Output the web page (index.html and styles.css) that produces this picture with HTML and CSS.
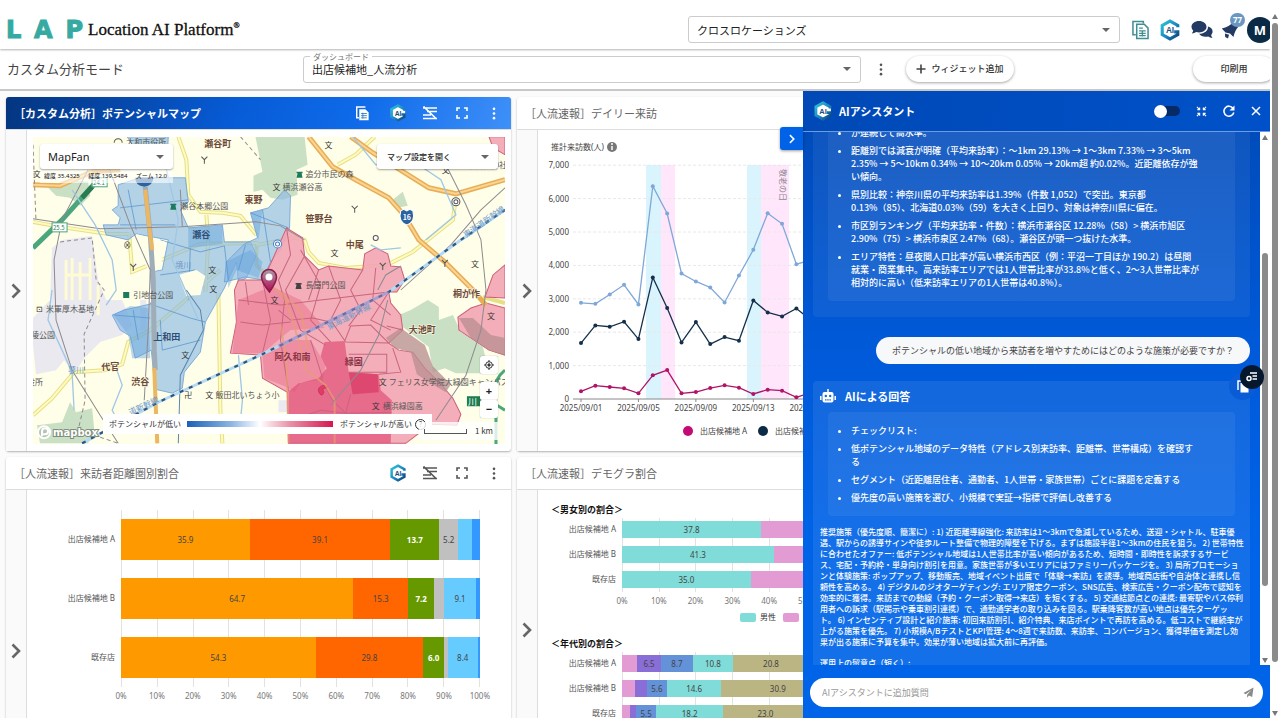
FILE: index.html
```html
<!DOCTYPE html>
<html lang="ja">
<head>
<meta charset="utf-8">
<title>Location AI Platform</title>
<link rel="stylesheet" href="styles.css">
</head>
<body>
<svg class="defs" aria-hidden="true">
  <defs>
    <linearGradient id="hexg" x1="0" y1="0" x2="1" y2="1"><stop offset="0" stop-color="#2cc4d4"/><stop offset=".55" stop-color="#1b86c4"/><stop offset="1" stop-color="#0d3f73"/></linearGradient>
    <linearGradient id="pin" x1="0" y1="0" x2="0" y2="1"><stop offset="0" stop-color="#a9a0a8"/><stop offset="1" stop-color="#b3054f"/></linearGradient>
  </defs>
  <symbol id="ai" viewBox="0 0 24 24"><path d="M12 1 21.500 6.500V17.500L12 23 2.500 17.500V6.500Z" fill="#fff"/><path d="M20.500 9V7L12 2.300 3.500 7v10l8.500 4.700 8.500-4.700v-3h-4" fill="none" stroke="url(#hexg)" stroke-width="3.400"/><text x="12" y="15.500" text-anchor="middle" font-family="Liberation Sans" font-weight="700" font-size="9" fill="#1d4f7c">AI</text></symbol>
  <symbol id="doc" viewBox="0 0 18 20"><path d="M12 3V1H1v14h3" fill="none" stroke="currentColor" stroke-width="1.600"/><path d="M5 4h8l4 4v11H5z" fill="none" stroke="currentColor" stroke-width="1.600"/><path d="M7.500 8h4M7.500 11h7M7.500 13.500h7M7.500 16h7M11 11v6" stroke="currentColor" stroke-width="1.400"/></symbol>
  <symbol id="docfill" viewBox="0 0 18 20"><path d="M12 2V1H1v15h3" fill="none" stroke="currentColor" stroke-width="2"/><path d="M4.500 4H13l4.500 4.500V19.500h-13z" fill="currentColor"/><path d="M7 10h8M7 13h8M7 16h8M9.500 9v8" stroke="#2f78bd" stroke-width="1.200"/></symbol>
  <symbol id="listoff" viewBox="0 0 16 14"><path d="M1 2h14M5 5.500h10M1 9h8M1 12.500h14M1.500 0.500l13 12.500" stroke="currentColor" stroke-width="1.700" fill="none"/></symbol>
  <symbol id="full" viewBox="0 0 12 12"><path d="M1 4V1h3M8 1h3v3M11 8v3H8M4 11H1V8" fill="none" stroke="currentColor" stroke-width="1.600"/></symbol>
  <symbol id="dots" viewBox="0 0 4 14"><circle cx="2" cy="2" r="1.400"/><circle cx="2" cy="7" r="1.400"/><circle cx="2" cy="12" r="1.400"/></symbol>
  <symbol id="chev" viewBox="0 0 10 16"><path d="M1.500 1.500 8 8l-6.500 6.500" fill="none" stroke="currentColor" stroke-width="2.600"/></symbol>
</svg>

<div class="app">
  <div class="page">
    <header class="topbar">
      <a class="brand" href="#">
        <span class="mark"><span>L</span><span>A</span><span>P</span></span>
        <span class="name">Location AI Platform<sup>®</sup></span>
      </a>
      <div class="tools">
        <label class="pick account"><select aria-label="アカウント"><option>クロスロケーションズ</option></select><i class="caret"></i></label>
        <button class="ico teal" aria-label="レポート"><svg width="17" height="20"><use href="#doc"/></svg></button>
        <button class="ico" aria-label="AI"><svg width="22" height="22"><use href="#ai"/></svg></button>
        <button class="ico navy" aria-label="チャット"><svg width="22" height="20" viewBox="0 0 22 20"><path d="M8 1c4.200 0 7.500 2.500 7.500 5.800S12.200 12.500 8 12.500c-1 0-2-.2-2.900-.4C4 13 2.500 13.500.8 13.500c.8-.9 1.200-1.900 1.400-3C1.100 9.500.500 8.200.500 6.800.500 3.500 3.800 1 8 1z" fill="currentColor"/><path d="M17 6.500c2.700.7 4.600 2.600 4.600 5 0 1.300-.6 2.500-1.500 3.400.2 1.200.7 2.100 1.300 3-1.700 0-3-.5-4.200-1.400-.8.200-1.700.3-2.600.3-2.900 0-5.300-1.200-6.500-3 5.200 0 9.200-3 8.900-7.300z" fill="currentColor"/></svg></button>
        <button class="ico navy bell" aria-label="お知らせ"><svg width="18" height="19" viewBox="0 0 18 19"><path d="M.8 8.500Q8 7 13 1.500L17.500 6.500Q13.500 11 12.500 17L9 13.500 4.500 12.500z" fill="currentColor"/><path d="M4 13.500l4 1.300-1 3.700-2.800-1.500z" fill="currentColor"/></svg><span class="badge">77</span></button>
        <button class="avatar" aria-label="ユーザー">M</button>
      </div>
    </header>

    <div class="subbar">
      <h1>カスタム分析モード</h1>
      <label class="pick board"><span class="float">ダッシュボード</span><select><option>出店候補地_人流分析</option></select><i class="caret"></i></label>
      <button class="ico grey" aria-label="メニュー"><svg width="4" height="13" fill="currentColor"><use href="#dots"/></svg></button>
      <button class="pill add"><svg width="10" height="10" viewBox="0 0 10 10"><path d="M5 .5v9M.5 5h9" stroke="#444" stroke-width="1.600"/></svg>ウィジェット追加</button>
      <button class="pill print">印刷用</button>
    </div>

    <div class="work">
      <main class="cards">
        <section class="card">
          <div class="head active"><h2>［カスタム分析］ポテンシャルマップ</h2>
            <button class="ico wide" aria-label="レポート"><svg width="13" height="15"><use href="#docfill"/></svg></button>
            <button class="ico" aria-label="AI"><svg width="18" height="18"><use href="#ai"/></svg></button>
            <button class="ico" aria-label="凡例"><svg width="16" height="14"><use href="#listoff"/></svg></button>
            <button class="ico" aria-label="拡大"><svg width="12" height="12"><use href="#full"/></svg></button>
            <button class="ico" aria-label="メニュー"><svg width="4" height="13" fill="currentColor"><use href="#dots"/></svg></button>
          </div>
          <div class="body">
            <button class="rail" aria-label="開く"><svg width="10" height="16"><use href="#chev"/></svg></button>
            <div class="mapwrap">
              <svg class="map" viewBox="33 137 471 307" preserveAspectRatio="xMidYMid slice">
                <rect x="33" y="137" width="471" height="307" fill="#fffee8"/>
                <g fill="#e9e9ef"><path d="M52 248 62 240 92 236 98 280 106 300 122 300 132 325 122 335 100 342 84 358 74 374 64 360 56 370 36 374 33 345 33 318 50 300Z"/><path d="M140 300h6v30h-6zM278 400h10v12h-10z"/></g>
                <path d="M66 260v40M72 258v42M80 262v38M90 258v42M98 285v30M66 275h24" stroke="#fffbd2" stroke-width="3" fill="none"/>
                <g fill="#c9e0c4"><path d="M48 188 66 180 88 182 90 196 80 206 70 198 56 196Z"/><path d="M37 425 62 422 70 402 76 412 92 408 94 428 88 443H40Z"/><path d="M253 176 262 172 255 137H304L307 165 296 170 297 195 282 200 270 198 262 190 253 192Z"/><path d="M398 315 410 310 427 300 438 307 438 320 452 315 460 332 482 347 488 373 455 373 444 368 432 372 428 347 402 327Z"/><path d="M392 200 402 192 407 206 397 208Z"/></g>
                <g fill="none" stroke="#e6df86" stroke-width="4"><path d="M33 222 60 227 108 234 129 234 M129 234 132 272 200 244 258 243M178 137 186 160 188 195 200 212 222 213 240 216 256 235M206 215 208 240 205 292M218 293 220 410 222 443M33 415 52 398 74 372 104 370 122 364 128 342 150 330 188 298 220 270M337 165 355 155 374 137M256 245 295 238 304 240 308 252 318 263 345 268 386 265 412 252 452 220 454 205M455 150 490 160M482 297 504 303M256 245 256 265 275 285"/></g>
                <g fill="none" stroke="#fffbc0" stroke-width="2"><path d="M33 222 60 227 108 234 129 234 132 272 200 244 258 243M178 137 186 160 188 195 200 212 222 213 240 216 256 235M206 215 208 240 205 292M218 293 220 410 222 443M33 415 52 398 74 372 104 370 122 364 128 342 150 330 188 298 220 270M337 165 355 155 374 137M256 245 295 238 304 240 308 252 318 263 345 268 386 265 412 252 452 220 454 205"/></g>
                <g fill="#8ab8e3" fill-opacity=".64" stroke="#6ba0d6" stroke-width=".8">
                  <path d="M127 137H168L167 158H140Z"/>
                  <path d="M118 185 140 178 185 178 188 202 180 210 188 228 222 225 224 242 250 242 256 255 246 278 238 282 236 262 224 288 205 322 200 352 184 372 182 388 172 393 155 389 151 350 135 358 130 336 120 330 112 315 124 310 150 304 152 300 150 272 162 270 168 240 136 234 128 240 106 235 103 225 118 225 120 218 112 210 118 206Z"/>
                  <path d="M250 213 268 208 284 190 290 196 289 228 280 250 270 262 262 280 245 277 224 282 226 262 244 244 257 238Z"/>
                </g>
                <g fill="#609fdd" fill-opacity=".42"><path d="M113 315 130 306 148 308 150 358 132 358 128 335ZM188 228 222 226 222 244 188 248ZM225 262 250 250 262 262 258 278 236 270 228 288ZM250 213 262 210 258 240Z"/></g>
                <path d="M120 208 188 200M128 190 136 230M120 225 175 225M160 240 200 252 224 246M190 248 188 300M160 275 195 270M150 304 190 318 205 322M160 320 162 350 200 340M133 310 138 340M114 315 150 318M224 246 228 280M245 245 238 270M250 213 288 228M262 210 270 262" fill="none" stroke="#5b97d0" stroke-width=".8"/>
                <path d="M136 234 166 242 160 268 150 274 142 258ZM178 275 196 270 205 276 200 295 186 296Z" fill="#fffee8"/>
                <path d="M145 187 150 235 153 280 154 350 155 370" fill="none" stroke="#9fadb8" stroke-width="5"/><path d="M145 190 149 228 152 250M154 368 157 443" fill="none" stroke="#ecb762" stroke-width="4"/>
                <g fill="#f2a5b4" fill-opacity=".9" stroke="#cc5f7b" stroke-width="1">
                  <path d="M286 228 302 238 304 256 318 270 328 266 362 270 364 254 375 248 387 254 390 266 400 267 404 280 396 292 388 292 390 303 400 315 402 330 388 343 398 350 412 352 424 368 440 384 452 398 460 414 456 425 430 424 405 443 288 443 287 392 262 378 260 355 230 353 236 322 234 290 238 280 262 280 270 264Z"/>
                  <path d="M488 137H504V155L492 148ZM484 297 492 275 504 265V298ZM457 317 470 308 485 303 504 308V355L488 350 470 338 458 330Z"/>
                </g>
                <g fill="#ed7893" fill-opacity=".6"><path d="M238 300 262 290 288 296 290 330 262 353 232 353ZM262 355 288 340 310 340 325 365 322 380 300 382 294 392 284 386 264 378ZM262 282 300 300 324 328 290 330 270 308Z"/></g>
                <path d="M324 342 344 341 348 372 378 374 380 390 391 400 390 443H288V391L298 383 318 378 326 368 320 356Z" fill="#e25278" fill-opacity=".72"/><path d="M348 372 377 374 378 392 352 394Z" fill="#dd4770"/>
                <path d="M385 338 400 328 424 345 432 366 450 384 445 392 428 382 416 374 410 352 394 348ZM458 318 472 318 490 335 504 338V355L488 350 470 338Z" fill="#b98f92" fill-opacity=".78"/>
                <path d="M286 228 290 255 278 280 284 300 280 340 288 391M262 280 270 320 262 353M238 300 280 305 320 300 388 292M300 250 320 285 310 320 330 342M304 256 285 290 300 330 325 345M328 266 340 300 330 320 345 342 388 343M362 270 350 290 360 310 348 326M375 268 372 300 390 315M388 292 370 320 390 330M318 270 308 300M344 341 350 326 370 325 388 343M348 354H386V372H348M310 340 322 378M290 420 320 410 345 413 391 412M320 378 332 400 345 413 350 394M278 310 290 320 312 318 330 322M240 322 262 325 290 322M245 282 248 305M392 348 400 372 378 374M402 330 386 326" fill="none" stroke="#c8657f" stroke-width="1"/>
                <path d="M318 388q4-5 9-1l-5 2q3 4-1 6-4-2-3-7z" fill="#e23b65" stroke="#c03058" stroke-width=".7"/>
                <g fill="none" stroke="#e79c75" stroke-width="2" opacity=".7"><path d="M282 292 292 320 306 370 325 385 334 400 334 443M280 325 286 360 288 443M270 285 300 310 308 350"/></g>
                <g fill="none" stroke="#e8ad55" stroke-width="5"><path d="M308 137 332 167 355 180 388 198 403 215 418 240 445 263 472 290 485 305M350 137 372 153 428 188 455 194 504 180M33 185 60 186 92 172 120 170"/></g>
                <g fill="none" stroke="#fad493" stroke-width="2"><path d="M308 137 332 167 355 180 388 198 403 215 418 240 445 263 472 290M350 137 372 153 428 188 455 194 504 180M33 185 60 186 92 172"/></g>
                <path d="M33 248 62 220 98 180" fill="none" stroke="#4aa67d" stroke-width="5"/><path d="M82 198 92 187" stroke="#2b7a53" stroke-width="5"/>
                <g fill="none" stroke="#8f8a90" stroke-width="1"><path d="M88 170 62 220 54 260 56 320 72 370 100 415 118 443M105 158 130 225 150 270 148 330 144 400M33 219 100 229 182 227 255 222 280 226 304 240M445 165 465 205 480 240 485 290 480 330 465 375 435 420M180 190 182 227M387 300 378 335 360 370 330 405M400 290 450 245 480 210 504 188M377 290 385 275 400 266"/><path d="M60 242 92 238 96 280 104 290 84 334 85 400 78 430M33 145 36 222M240 137 260 160M80 430 118 443" stroke-dasharray="4 3"/></g>
                <path d="M52 290 48 320 62 350 72 372 74 410M72 190 95 225 112 260 116 290 106 305M115 365 122 385 112 410 120 425M165 165 178 220 172 260 185 290 198 320M352 137 375 165 410 160 440 180 455 215 425 240M370 245 380 250 400 248M238 355 242 400 240 420" fill="none" stroke="#9fc7e6" stroke-width="1.300"/>
                <path d="M186 290 200 310 203 330 180 375 178 443" fill="none" stroke="#5b87ae" stroke-width="1"/>
                <path d="M82 443 160 401 262 354 388 292 460 240 504 210" fill="none" stroke="#b3d9f5" stroke-width="3"/><path d="M82 443 160 401 262 354 388 292 460 240 504 210" fill="none" stroke="#2f567e" stroke-width="2.200" stroke-dasharray="4 6"/>
                <path d="M278 346 388 292" fill="none" stroke="#a077b4" stroke-width="3" opacity=".6"/>
                <g fill="#fff" stroke="#4aa67d" stroke-width="1"><rect x="92" y="178" width="15" height="9"/><rect x="52" y="223" width="15" height="9"/></g>
                <path d="M135 178h18q0 8-9 9-9-1-9-9z" fill="#2c62a0"/>
                <path d="M466 396h18v10h-18z" fill="#1e7c50"/><text x="467" y="405" font-size="9" fill="#fff">川</text>
                <path d="M504 370q-10 8-10 20M495 410v34M488 400l16 10" fill="none" stroke="#4aa67d" stroke-width="3"/>
                <path d="M400 211 403 209.500 406 211 409 209.500 412 211Q415 222 406 225 397 222 400 211Z" fill="#2c62a0" stroke="#fff"/>
                <text x="406" y="220" text-anchor="middle" font-size="7" font-weight="700" fill="#fff">16</text>
                <g class="sm" fill="#2f7a58"><text x="93" y="185">24.1</text><text x="53" y="230">25.5</text></g>
                <g class="town"><text x="204" y="147">瀬谷町</text><text x="244" y="203">東野</text><text x="305" y="222">笹野台</text><text x="345" y="248">中尾</text><text x="408" y="333">大池町</text><text x="274" y="360" class="rosy">阿久和南</text><text x="344" y="365" class="rosy">緑園</text><text x="452" y="297">桐が作</text><text x="101" y="370">代官</text><text x="131" y="385">渋谷</text><text x="153" y="340" class="bluish">上和田</text><text x="192" y="238" class="bluish">瀬谷</text></g>
                <g class="poi"><text x="180" y="209">瀬谷本郷公園</text><text x="133" y="298">引地台公園</text><text x="46" y="312">米軍厚木基地</text><text x="31" y="338">陵公園</text><text x="305" y="177">追分市民の森</text><text x="282" y="190">横浜瀬谷高</text><text x="305" y="288">長屋門公園</text><text x="388" y="385">フェリス女学院大緑園キャンパス</text><text x="382" y="409">横浜緑園高</text><text x="215" y="398">飯田北いちょう小</text><text x="27" y="385">役所</text><text x="126" y="145">大和市役所</text><text x="466" y="168">中白根神社</text></g>
                <g class="poi dark"><text x="33" y="177">文</text><text x="324" y="148">文</text><text x="272" y="190">文</text><text x="330" y="256">文</text><text x="441" y="173">文</text><text x="470" y="267">文</text><text x="181" y="358">文</text><text x="205" y="398">文</text><text x="208" y="273">文</text><text x="209" y="292">文</text><text x="378" y="385">文</text><text x="371" y="409">文</text><text x="486" y="319">文</text><text x="270" y="303">文</text><text x="184" y="398">卍</text><text x="36" y="312">⊡</text><text x="123" y="248">⊗</text></g>
                <path d="M201 157l3 3 3-3M204 160v4M351 206l3 3 3-3M354 209v4M130 264l3 3 3-3M133 267v4M379 263l3 3 3-3M382 266v4M441 260l3 3 3-3M444 263v4" fill="none" stroke="#555"/>
                <g fill="#1d7a5a"><path d="M170 204h6v1.500h-1l1 4.500h-6l1-4.500h-1zM123 292h6v6h-6zM296 172h6v1.500h-1l1 4.500h-6l1-4.500h-1z"/><path d="M295 283h6v1.500h-1l1 4.500h-6l1-4.500h-1z" fill="#444"/></g>
                <g class="river"><text x="175" y="268">境川</text><text x="68" y="373">蓼川</text><text transform="translate(465 238) rotate(-35)">東海道新幹線</text><text transform="translate(328 330) rotate(-27)">東海道新幹線</text><text transform="translate(130 415) rotate(-25)">道新幹線</text></g>
                <g fill="#fff" stroke="#555"><circle cx="455" cy="202" r="4"/><circle cx="455" cy="202" r="2"/><circle cx="277" cy="244" r="4" stroke="#4b7dc2"/><circle cx="277" cy="244" r="2" stroke="#4b7dc2"/><circle cx="375" cy="238" r="2.500"/><path d="M114 143a4 4 0 1 1 8 0" fill="none"/></g>
                <path d="M269 292Q261 282 261 277a7.500 7.500 0 0 1 15 0q0 5-7 15z" fill="url(#pin)" stroke="#8c1a4c" stroke-width="1.500"/><circle cx="268.500" cy="277" r="3.500" fill="#fff"/>
                <g fill="none" stroke="#fff" stroke-width="2"><circle cx="44" cy="432" r="6" fill="#b6c6b0"/><path d="M42 436v-5a3 3 0 1 1 3 3h-2"/></g>
                <text x="53" y="436" class="mb">mapbox</text>
              </svg>
              <div class="scale-strip">
                <span>ポテンシャルが低い</span><i class="low"></i><i class="high"></i><span>ポテンシャルが高い</span><b>?</b>
              </div>
              <div class="mapbox-left">
                <label class="pick mapsel"><select aria-label="地図"><option>MapFan</option></select><i class="caret"></i></label>
                <div class="coord"><span>緯度 35.4325</span><span>経度 139.5484</span><span>ズーム 12.0</span></div>
              </div>
              <label class="pick mapset"><select aria-label="マップ設定"><option>マップ設定を開く</option></select><i class="caret"></i></label>
              <div class="mapbtns">
                <button aria-label="現在地"><svg width="10" height="10" viewBox="0 0 10 10" fill="none" stroke="#333"><circle cx="5" cy="5" r="3.300"/><circle cx="5" cy="5" r="1.200" fill="#333"/><path d="M5 0v2M5 8v2M0 5h2M8 5h2"/></svg></button>
                <div><button>+</button><button>−</button></div>
              </div>
              <div class="km"><i></i>1 km</div>
            </div>
          </div>
        </section>

        <section class="card">
          <div class="head"><h2>［人流速報］デイリー来訪</h2></div>
          <div class="body">
            <button class="rail" aria-label="開く"><svg width="10" height="16"><use href="#chev"/></svg></button>
            <svg class="line" id="daily" viewBox="538 130 726 320" preserveAspectRatio="xMinYMin slice"></svg>
          </div>
        </section>

        <section class="card">
          <div class="head"><h2>［人流速報］来訪者距離圏別割合</h2>
            <button class="ico" aria-label="AI"><svg width="18" height="18"><use href="#ai"/></svg></button>
            <button class="ico" aria-label="凡例"><svg width="16" height="14"><use href="#listoff"/></svg></button>
            <button class="ico" aria-label="拡大"><svg width="12" height="12"><use href="#full"/></svg></button>
            <button class="ico" aria-label="メニュー"><svg width="4" height="13" fill="currentColor"><use href="#dots"/></svg></button>
          </div>
          <div class="body">
            <button class="rail" aria-label="開く"><svg width="10" height="16"><use href="#chev"/></svg></button>
            <div class="chart dist" id="dist"></div>
          </div>
        </section>

        <section class="card short">
          <div class="head"><h2>［人流速報］デモグラ割合</h2></div>
          <div class="body">
            <button class="rail" aria-label="開く"><svg width="10" height="16"><use href="#chev"/></svg></button>
            <div class="demo">
              <h3>＜男女別の割合＞</h3>
              <div class="chart small" id="sex"></div>
              <div class="keys"><i class="c-teal"></i>男性<i class="c-pink"></i>女性</div>
              <h3>＜年代別の割合＞</h3>
              <div class="chart small" id="age"></div>
            </div>
          </div>
        </section>
      </main>

      <aside class="assist">
        <button class="tab" aria-label="閉じる"><svg width="6" height="10"><use href="#chev"/></svg></button>
        <header>
          <svg width="20" height="20"><use href="#ai"/></svg><h2>AIアシスタント</h2>
          <label class="switch"><input type="checkbox" aria-label="切替"></label>
          <button class="ico" aria-label="縮小"><svg width="11" height="11" viewBox="0 0 12 12"><path d="M1 1l3 3M11 1 8 4M1 11l3-3M11 11 8 8M4 1.500V4H1.500M8 1.500V4h2.500M4 10.500V8H1.500M8 10.500V8h2.500" fill="none" stroke="#fff" stroke-width="1.200"/></svg></button>
          <button class="ico" aria-label="更新"><svg width="12" height="12" viewBox="0 0 12 12"><path d="M10 3.200A5 5 0 1 0 10.800 7.500" fill="none" stroke="#fff" stroke-width="1.600"/><path d="M11.500.500v5h-5z" fill="#fff"/></svg></button>
          <button class="ico" aria-label="閉じる"><svg width="10" height="10" viewBox="0 0 10 10"><path d="M1 1l8 8M9 1 1 9" stroke="#fff" stroke-width="1.500"/></svg></button>
        </header>
        <div class="scroll">
          <div class="thread">
            <article class="msg first">
              <ul>
                <li>が連続して高水準。</li>
                <li>距離別では減衰が明確（平均来訪率）：〜1km 29.13% → 1〜3km 7.33% → 3〜5km<br>2.35% → 5〜10km 0.34% → 10〜20km 0.05% → 20km超 約0.02%。近距離依存が強<br>い傾向。</li>
                <li>県別比較：神奈川県の平均来訪率は1.39%（件数 1,052）で突出。東京都<br>0.13%（85）、北海道0.03%（59）を大きく上回り、対象は神奈川県に偏在。</li>
                <li>市区別ランキング（平均来訪率・件数）：横浜市瀬谷区 12.28%（58）&gt; 横浜市旭区<br>2.90%（75）&gt; 横浜市泉区 2.47%（68）。瀬谷区が頭一つ抜けた水準。</li>
                <li>エリア特性：昼夜間人口比率が高い横浜市西区（例：平沼一丁目ほか 190.2）は昼間<br>就業・商業集中。高来訪率エリアでは1人世帯比率が33.8%と低く、2〜3人世帯比率が<br>相対的に高い（低来訪率エリアの1人世帯は40.8%）。</li>
              </ul>
            </article>
            <p class="ask">ポテンシャルの低い地域から来訪者を増やすためにはどのような施策が必要ですか？</p>
            <article class="msg reply">
              <h3><svg width="16" height="14" viewBox="0 0 16 14"><rect x="2.500" y="3" width="11" height="10.500" rx="2" fill="#fff"/><path d="M8 0v3M.8 7v4M15.200 7v4" stroke="#fff" stroke-width="1.500"/><circle cx="5.800" cy="7" r="1.200" fill="#1468dd"/><circle cx="10.200" cy="7" r="1.200" fill="#1468dd"/><path d="M5 10.800h6" stroke="#1468dd" stroke-width="1.200" stroke-dasharray="1.500 .7"/></svg>AIによる回答</h3>
              <ul>
                <li>チェックリスト:</li>
                <li>低ポテンシャル地域のデータ特性（アドレス別来訪率、距離帯、世帯構成）を確認す<br>る</li>
                <li>セグメント（近距離居住者、通勤者、1人世帯・家族世帯）ごとに課題を定義する</li>
                <li>優先度の高い施策を選び、小規模で実証→指標で評価し改善する</li>
              </ul>
              <p>推奨施策（優先度順、簡潔に）: 1) 近距離導線強化: 来訪率は1〜3kmで急減しているため、送迎・シャトル、駐車優<br>遇、駅からの誘導サインや徒歩ルート整備で物理的障壁を下げる。まずは施設半径1〜3kmの住民を狙う。 2) 世帯特性<br>に合わせたオファー: 低ポテンシャル地域は1人世帯比率が高い傾向があるため、短時間・即時性を訴求するサービ<br>ス、宅配・予約枠・単身向け割引を用意。家族世帯が多いエリアにはファミリーパッケージを。 3) 局所プロモーショ<br>ンと体験施策: ポップアップ、移動販売、地域イベント出展で「体験→来訪」を誘導。地域商店街や自治体と連携し信<br>頼性を高める。 4) デジタルのジオターゲティング: エリア限定クーポン、SNS広告、検索広告・クーポン配布で認知を<br>効率的に獲得。来訪までの動線（予約・クーポン取得→来店）を短くする。 5) 交通結節点との連携: 最寄駅やバス停利<br>用者への訴求（駅掲示や乗車割引連携）で、通勤通学者の取り込みを図る。駅乗降客数が高い地点は優先ターゲッ<br>ト。 6) インセンティブ設計と紹介施策: 初回来訪割引、紹介特典、来店ポイントで再訪を高める。低コストで継続率が<br>上がる施策を優先。 7) 小規模A/BテストとKPI管理: 4〜8週で来訪数、来訪率、コンバージョン、獲得単価を測定し効<br>果が出る施策に予算を集中。効果が薄い地域は拡大前に再評価。</p>
              <p>運用上の留意点（短く）:</p>
              <button class="copy" aria-label="コピー"><svg width="12" height="13" viewBox="0 0 12 13"><path d="M1 10V1h7" fill="none" stroke="#fff" stroke-width="1.500"/><path d="M3.500 3H9l2.500 2.500V12.500h-8z" fill="#fff"/></svg></button>
            </article>
          </div>
          <div class="bar inner"><i class="up"></i><i class="thumb"></i><i class="down"></i></div>
        </div>
        <form class="entry"><input type="text" aria-label="質問" placeholder="AIアシスタントに追加質問"><button type="button" aria-label="送信"><svg width="11" height="11" viewBox="0 0 12 12"><path d="M.5 6.500 11.500.500 10 11 6.500 9.300 4.500 11.800V8.500L9 3.500 3 7.800z" fill="#8a8a8a"/></svg></button></form>
        <button class="fab" aria-label="設定"><svg width="12" height="12" viewBox="0 0 12 12" fill="none" stroke="#fff"><path d="M4 2h7M6.500 5h4.500M6.500 8h4.500" stroke-width="1.300"/><circle cx="3" cy="7.500" r="2" stroke-width="1.500"/></svg></button>
      </aside>
    </div>
  </div>
  <div class="bar outer"><i class="up"></i><i class="thumb"></i><i class="down"></i></div>
</div>
<script src="app.js"></script>
</body>
</html>
```
FILE: styles.css
```css
* { box-sizing: border-box; }
body { margin: 0; overflow: hidden; background: #fff; color: #333; font: 11px/16px "Noto Sans CJK JP", "Noto Sans", sans-serif; }
h1, h2, h3, p, ul { margin: 0; padding: 0; font-weight: 400; }
button { padding: 0; border: 0; background: none; color: inherit; font: inherit; }
svg { display: block; flex: none; }
.defs { position: absolute; width: 0; height: 0; }
.app { display: flex; height: 100vh; padding-bottom: 2px; }
.page { flex: 1; min-width: 0; display: flex; flex-direction: column; overflow: hidden; }

.topbar { flex: none; display: flex; align-items: center; height: 49px; padding: 10px 0 0 6px; box-shadow: 0 1px 2px rgba(0,0,0,.3); z-index: 2; }
.brand { display: flex; align-items: center; gap: 5px; color: #111; text-decoration: none; }
.mark { display: flex; justify-content: space-between; width: 77px; font: 700 24px/24px "DejaVu Sans", sans-serif; -webkit-text-stroke: 1px #36aaa2; color: #36aaa2; }
.name { font: 17px/20px "Liberation Serif", serif; -webkit-text-stroke: .3px #111; }
.name sup { font-size: 8px; line-height: 8px; }
.tools { display: flex; align-items: center; gap: 10px; margin-left: auto; margin-right: -3px; }
.ico { display: flex; align-items: center; justify-content: center; position: relative; }
.teal { color: #3d8f93; }
.navy { color: #233a63; }
.grey { color: #555; }
.account { margin-right: 2px; width: 432px; height: 27px; }
.bell { margin-left: -2px; }
.badge { position: absolute; top: -7px; left: 9px; padding: 0 3px; border-radius: 7px; background: #6a97c2; color: #fff; font: 700 8px/14px "Noto Sans", sans-serif; }
.avatar { width: 26px; height: 26px; margin-left: -2px; border-radius: 50%; background: #0b2a45; color: #fff; font: 700 13px/26px "Noto Sans", sans-serif; }

.pick { position: relative; display: grid; align-items: center; border: 1px solid #ccc; border-radius: 3px; background: #fff; color: #222; }
.pick select { grid-area: 1 / 1; width: 100%; height: 100%; padding: 0 8px; border: 0; background: none; appearance: none; color: inherit; font: inherit; }
.caret { grid-area: 1 / 1; justify-self: end; margin-right: 9px; border: 4px solid transparent; border-top-color: #666; border-bottom: 0; pointer-events: none; }

.subbar { flex: none; display: flex; align-items: center; height: 42px; padding-left: 7px; border-bottom: 2px solid #c8c8c8; }
.subbar h1 { width: 296px; font-size: 13px; line-height: 20px; color: #444; }
.board { flex: 0 1 558px; height: 27px; }
.float { position: absolute; top: -5px; left: 6px; padding: 0 3px; background: #fff; color: #777; font-size: 8px; line-height: 10px; }
.subbar .ico { margin: 0 23px 0 18px; }
.pill { display: flex; align-items: center; justify-content: center; gap: 5px; height: 26px; border-radius: 13px; background: #fff; box-shadow: 0 1px 3px rgba(0,0,0,.35); font-size: 9px; font-weight: 500; }
.add { width: 108px; }
.print { width: 82px; margin-left: auto; margin-right: -5px; }

.work { position: relative; flex: 1; min-height: 0; overflow: hidden; }
.cards { display: grid; grid-template-columns: 505px 1fr; grid-auto-rows: 354px; gap: 6px; padding: 6px; background: #fbfbfb; align-items: start; }
.card { display: flex; flex-direction: column; height: 354px; background: #fff; border-radius: 3px; box-shadow: 0 1px 2px rgba(0,0,0,.3); }
.short { height: 312px; }
.head { flex: none; display: flex; align-items: center; gap: 14px; height: 33px; padding: 0 8px; border-bottom: 1px solid #ddd; color: #555; }
.head h2 { flex: 1; font-size: 11px; line-height: 16px; color: #666; }
.head .ico { width: 18px; }
.head .wide { margin-right: 4px; }
.active { border-radius: 3px 3px 0 0; background: linear-gradient(110deg, #04357f, #075bd6 45%, #0f6bea 70%, #3f90f8); color: #fff; }
.active h2 { color: #fff; font-weight: 700; }
.body { flex: 1; display: flex; min-height: 0; }
.rail { flex: none; width: 21px; display: flex; align-items: center; justify-content: center; border-right: 1px solid #ddd; background: #fafafa; color: #666; }

.mapwrap { position: relative; flex: 1; margin: 7px 6px; }
.map { width: 100%; height: 100%; font-family: "Noto Sans CJK JP", sans-serif; }
.town { font-size: 9px; font-weight: 700; fill: #6b4a36; stroke: #fffbe8; stroke-width: 1px; paint-order: stroke; }
.town .rosy { fill: #8b3648; stroke: none; }
.town .bluish { fill: #2f4f76; stroke: none; }
.poi { font-size: 8px; fill: #555; }
.dark { fill: #333; }
.river { font-size: 8px; fill: #6f9acb; }
.sm { font-size: 6px; }
.mb { font: 700 10px "DejaVu Sans", sans-serif; fill: #fff; stroke: #7f8d7c; stroke-width: 2px; paint-order: stroke; }
.mapbox-left { position: absolute; top: 7px; left: 7px; width: 133px; }
.mapsel, .mapset { border: 0; box-shadow: 0 1px 2px rgba(0,0,0,.35); }
.mapsel { height: 25px; font-size: 11px; font-family: "Noto Sans", sans-serif; }
.coord { display: flex; justify-content: space-between; padding: 0 6px 0 4px; background: rgba(255,255,255,.6); font: 6px/14px "Noto Sans", "Noto Sans CJK JP", sans-serif; color: #111; }
.mapset { position: absolute; top: 7px; right: 7px; width: 121px; height: 25px; font-size: 8px; font-weight: 500; }
.mapset select { padding-left: 10px; }
.mapbtns { position: absolute; right: 7px; top: 219px; display: grid; gap: 8px; }
.mapbtns button { display: flex; align-items: center; justify-content: center; width: 18px; height: 18px; background: #fff; border-radius: 2px; box-shadow: 0 0 1px rgba(0,0,0,.5); font: 700 11px/16px "Noto Sans", sans-serif; color: #222; }
.scale-strip { position: absolute; left: 70px; bottom: 10px; display: flex; align-items: center; height: 20px; padding: 0 6px; background: #fff; font-size: 8px; white-space: nowrap; }
.scale-strip i { width: 73px; height: 6px; }
.scale-strip .low { margin-left: 6px; background: linear-gradient(90deg, #1c60b8, #8bb4e2 60%, #fff); }
.scale-strip .high { margin-right: 7px; background: linear-gradient(90deg, #fff, #ea93a8 40%, #d8164f); }
.scale-strip b { width: 11px; height: 11px; margin-left: 3px; border: 1px solid #333; border-radius: 50%; font-size: 7px; line-height: 9px; text-align: center; }
.km { position: absolute; right: 7px; bottom: 4px; display: flex; align-items: center; gap: 8px; height: 18px; padding: 0 5px; background: rgba(255,255,255,.8); font-size: 8px; }
.km i { width: 43px; height: 5px; border: 1px solid #555; border-top: 0; }

.line { flex: 1; min-width: 0; height: 320px; font-family: "Noto Sans", "Noto Sans CJK JP", sans-serif; font-size: 8px; }
.line text { fill: #444; }

.chart { display: grid; grid-template-columns: 94px 1fr; font-family: "Noto Sans", "Noto Sans CJK JP", sans-serif; font-size: 8px; line-height: 12px; color: #555; }
.dist { flex: 1; padding: 20px 31px 0 0; align-content: start; }
.names { padding: 9px 6px; display: grid; gap: 18px; text-align: right; }
.names span { height: 41px; line-height: 40px; }
.plot { display: grid; }
.lines, .bars { grid-area: 1 / 1; }
.lines { display: flex; border-right: 1px solid #e2e2e2; }
.lines i { flex: 1; border-left: 1px solid #e2e2e2; }
.bars { display: grid; gap: 18px; padding: 9px 0; }
.row { display: flex; height: 41px; overflow: hidden; }
.row span { flex: none; display: flex; align-items: center; justify-content: center; color: #444; }
.row .c-green { color: #fff; font-weight: 700; }
.ticks { grid-column: 2; display: flex; justify-content: space-between; padding-top: 3px; color: #777; }
.ticks span { width: 0; display: flex; justify-content: center; }
.demo { flex: 1; min-width: 0; padding: 12px 13px; color: #333; }
.demo h3 { font-size: 9px; line-height: 16px; font-weight: 700; color: #111; }
.small { width: 452px; margin-left: -13px; grid-template-columns: 84px 1fr; }
.small .names, .small .bars { gap: 8px; padding-top: 3px; padding-bottom: 4px; }
.small .names span { height: 17px; line-height: 16px; }
.small .row { height: 17px; }
.keys { display: flex; align-items: center; gap: 4px; width: 380px; height: 20px; margin: 0 0 9px 186px; font-size: 8px; line-height: 12px; }
.keys i { width: 16px; height: 9px; margin-left: 3px; border-radius: 2px; }
.c-orange { background: #ff9900; }
.c-deep { background: #ff6600; }
.c-green { background: #669900; }
.c-silver { background: #c0c0c0; }
.c-sky { background: #66ccff; }
.c-azure { background: #3399ff; }
.c-teal { background: #80dcd8; }
.c-pink { background: #e39bd3; }
.c-violet { background: #8a6ed8; }
.c-blue { background: #6492d8; }
.c-khaki { background: #bbb584; }

.assist { position: absolute; top: 0; right: 0; bottom: 0; width: 467px; display: flex; flex-direction: column; background: linear-gradient(#0049b6, #005ad9 42%, #0064e8 75%); color: #fff; }
.assist > header { flex: none; display: flex; align-items: center; height: 41px; padding: 0 9px 0 10px; border-bottom: 1px solid #6d9de0; background: linear-gradient(100deg, #0049b6, #0051c9); }
.assist header h2 { flex: 1; margin-left: 6px; font-size: 11px; font-weight: 700; }
.assist header .ico { margin-left: 16px; }
.switch { display: flex; }
.switch input { appearance: none; position: relative; width: 26px; height: 10px; margin: 0; border-radius: 5px; background: #062a66; }
.switch input::before { content: ""; position: absolute; left: 0; top: -1px; width: 13px; height: 13px; border-radius: 50%; background: #fff; }
.tab { position: absolute; left: -23px; top: 36px; width: 23px; height: 23px; display: flex; align-items: center; justify-content: center; border-radius: 3px 0 0 3px; background: #0062e6; box-shadow: 0 1px 3px rgba(0,0,0,.4); }
.scroll { flex: 1; min-height: 0; display: flex; }
.thread { flex: 1; min-width: 0; padding: 0 10px; overflow: hidden; }
.msg { position: relative; border-radius: 4px; background: rgba(255,255,255,.06); }
.first { margin-top: -18px; padding: 0 15px 16px; }
.msg ul { padding: 12px 12px 12px 23px; border-radius: 4px; background: rgba(255,255,255,.06); list-style: disc; font-size: 9px; line-height: 13px; font-weight: 500; white-space: nowrap; }
.msg li + li { margin-top: 5px; }
.ask { width: fit-content; margin: 20px 0 17px auto; padding: 7px 16px; border-radius: 14px; background: #f7f8fa; color: #444; font-size: 9px; line-height: 13px; }
.reply { padding: 7px 15px 20px; background: rgba(255,255,255,.08); }
.reply h3 { display: flex; align-items: center; gap: 9px; margin: 0 -8px 8px; font-size: 11px; line-height: 16px; font-weight: 700; }
.reply p { margin: 10px -8px 0; font-size: 8px; line-height: 11px; font-weight: 500; white-space: nowrap; }
.copy { position: absolute; top: -8px; right: -6px; width: 27px; height: 27px; display: flex; align-items: center; justify-content: center; border-radius: 50%; background: #0a5cd6; }
.fab { position: absolute; right: 6px; top: 274px; width: 24px; height: 24px; display: flex; align-items: center; justify-content: center; border-radius: 50%; background: #06182e; }
.entry { flex: none; display: flex; align-items: center; height: 29px; margin: 13px 7px 11px; padding: 0 9px 0 12px; border-radius: 15px; background: #fff; }
.entry input { flex: 1; padding: 0; border: 0; outline: 0; background: none; font: inherit; font-size: 9px; }
.entry input::placeholder { color: #999; }

.bar { flex: none; width: 10px; display: flex; flex-direction: column; align-items: center; background: #fff; }
.bar .thumb { width: 6px; border-radius: 3px; background: #8b8b8b; }
.up, .down { border: 3px solid transparent; }
.up { border-top: 0; border-bottom: 5px solid #777; }
.down { margin-top: auto; border-bottom: 0; border-top: 5px solid #777; }
.outer { padding: 14px 0 2px; }
.outer .thumb { flex: 0 0 91%; margin-top: 4px; }
.inner { padding: 3px 0 2px; }
.inner .thumb { flex: 0 0 63%; margin-top: 113px; }
```
FILE: app.js
```js
const NS = 'http://www.w3.org/2000/svg';

function el(parent, tag, attrs, text) {
  const n = document.createElementNS(NS, tag);
  for (const k in attrs) n.setAttribute(k, attrs[k]);
  if (text) n.textContent = text;
  parent.appendChild(n);
  return n;
}

function drawDaily() {
  const svg = document.getElementById('daily');
  const x = i => 581 + i * 14.36;
  const y = v => 399 - v * 0.0334;
  const bands = [[646, 15, '#d9f4fd'], [661, 14, '#ffe6fb'], [747, 14, '#d9f4fd'], [761, 28, '#ffe6fb']];
  bands.forEach(b => el(svg, 'rect', { x: b[0], y: 165, width: b[1], height: 234, fill: b[2] }));
  for (let v = 0; v <= 7000; v += 1000) {
    el(svg, 'line', { x1: 573, x2: 1240, y1: y(v), y2: y(v), stroke: v ? '#e8e8e8' : '#888', 'stroke-dasharray': v ? '3 2' : 'none' });
    el(svg, 'text', { x: 569, y: y(v) + 3, 'text-anchor': 'end' }, v.toLocaleString('en-US'));
  }
  ['2025/09/01', '2025/09/05', '2025/09/09', '2025/09/13', '2025/09/17'].forEach((d, i) => {
    el(svg, 'line', { x1: x(i * 4), x2: x(i * 4), y1: 399, y2: 402, stroke: '#888' });
    el(svg, 'text', { x: x(i * 4), y: 411, 'text-anchor': 'middle' }, d);
  });
  el(svg, 'text', { x: 551, y: 150 }, '推計来訪数(人)');
  el(svg, 'circle', { cx: 612, cy: 147, r: 5, fill: '#777' });
  el(svg, 'path', { d: 'M612 146v4M612 143v2', stroke: '#fff', 'stroke-width': 1.5 });
  el(svg, 'text', { transform: 'translate(780 169) rotate(90)', opacity: 0.6 }, '敬老の日');
  const series = [
    ['#7fa8d8', [2881, 2851, 3131, 3420, 2831, 6371, 5553, 3759, 3519, 3340, 2891, 3699, 4466, 5563, 5244, 4038, 4157]],
    ['#14304a', [1675, 2203, 2163, 2313, 1795, 3639, 2722, 1695, 2303, 1645, 1854, 1745, 2951, 2592, 2473, 2712, 2363]],
    ['#b01468', [229, 399, 359, 319, 169, 708, 867, 169, 209, 329, 409, 339, 150, 279, 249, 50, 189]]
  ];
  series.forEach(([c, vals]) => {
    el(svg, 'polyline', { points: vals.map((v, i) => x(i) + ',' + y(v)).join(' '), fill: 'none', stroke: c, 'stroke-width': 1.3 });
    vals.forEach((v, i) => el(svg, 'circle', { cx: x(i), cy: y(v), r: 2, fill: c }));
  });
  el(svg, 'circle', { cx: 688, cy: 431, r: 5, fill: '#c20c74' });
  el(svg, 'text', { x: 700, y: 434 }, '出店候補地 A');
  el(svg, 'circle', { cx: 763, cy: 431, r: 5, fill: '#0b2a45' });
  el(svg, 'text', { x: 775, y: 434 }, '出店候補地 B');
}

function drawBars(id, colors, rows, shown) {
  const names = ['出店候補地 A', '出店候補地 B', '既存店'];
  const bars = rows.map(r => '<div class="row">' + r.map((v, i) =>
    `<span class="c-${colors[i]}" style="width:${v}%">${v >= shown ? v.toFixed(1) : ''}</span>`).join('') + '</div>').join('');
  let ticks = '';
  for (let t = 0; t <= 100; t += 10) ticks += `<span>${t}%</span>`;
  document.getElementById(id).innerHTML =
    '<div class="names">' + names.map(n => `<span>${n}</span>`).join('') + '</div>' +
    '<div class="plot"><div class="lines">' + '<i></i>'.repeat(10) + '</div><div class="bars">' + bars + '</div></div>' +
    '<div class="ticks">' + ticks + '</div>';
}

drawDaily();
drawBars('dist', ['orange', 'deep', 'green', 'silver', 'sky', 'azure'],
  [[35.9, 39.1, 13.7, 5.2, 4, 2.1], [64.7, 15.3, 7.2, 2.7, 9.1, 1], [54.3, 29.8, 6, 0.9, 8.4, 0.6]], 5);
drawBars('sex', ['teal', 'pink'], [[37.8, 62.2], [41.3, 58.7], [35, 65]], 5);
drawBars('age', ['pink', 'violet', 'blue', 'teal', 'khaki', 'silver'],
  [[4.1, 6.5, 8.7, 10.8, 20.8, 49.1], [3.5, 3.2, 5.6, 14.6, 30.9, 42.2], [2.2, 1.6, 5.5, 18.2, 23, 49.5]], 5);
```
